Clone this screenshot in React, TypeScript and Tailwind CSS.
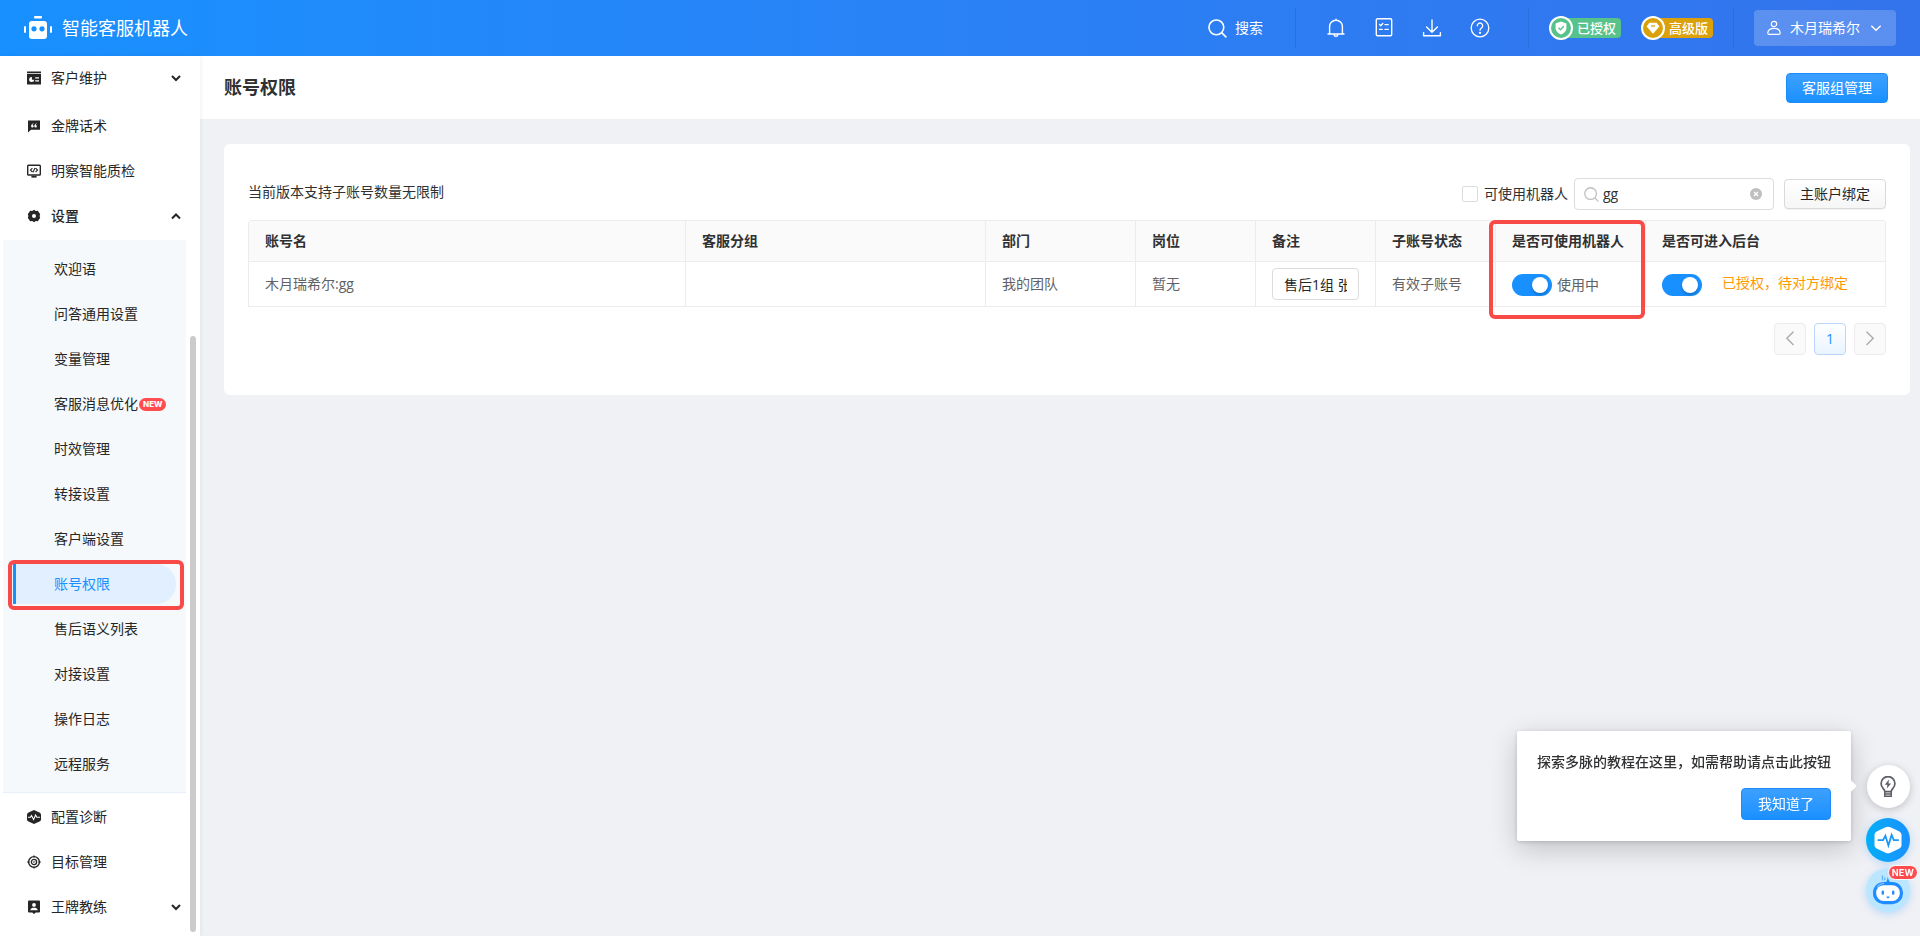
import React, { useState } from "react";

const line = {
  fill: "none",
  stroke: "currentColor",
  strokeLinecap: "round",
  strokeLinejoin: "round",
} as const;

function LogoIcon() {
  return (
    <svg width="28" height="24" viewBox="0 0 28 24" aria-hidden="true">
      <g fill="#fff">
        <rect x="10" y="0" width="8" height="2.6" rx="1" />
        <rect x="5" y="5" width="18" height="18" rx="3" />
        <rect x="0" y="10" width="2" height="7" rx="1" />
        <rect x="26" y="10" width="2" height="7" rx="1" />
      </g>
      <circle cx="10" cy="12.8" r="2.6" fill="#1890ff" />
      <circle cx="18" cy="12.8" r="2.6" fill="#1890ff" />
    </svg>
  );
}

function SearchIcon({ size }: { size: number }) {
  return (
    <svg width={size} height={size} viewBox="0 0 20 20" aria-hidden="true" {...line} strokeWidth="1.7">
      <circle cx="8.8" cy="8.8" r="7.8" />
      <path d="M14.6 14.6L18.8 18.8" />
    </svg>
  );
}

function BellIcon() {
  return (
    <svg width="20" height="20" viewBox="0 0 20 20" aria-hidden="true" {...line} strokeWidth="1.4">
      <path d="M3.6 15.8V8.6a6.4 6.4 0 0 1 12.800 0v7.200M2 16h16M8.2 16.6a1.800 1.800 0 0 0 3.600 0M10 2V1.200" />
    </svg>
  );
}

function TaskIcon() {
  return (
    <svg width="20" height="20" viewBox="0 0 20 20" aria-hidden="true" {...line} strokeWidth="1.4">
      <rect x="2.3" y=".8" width="15.4" height="17" rx="1.2" />
      <path d="M5.6 6.600l1.100 1.100L8.800 5.600M11 6.600h3.200M5.600 11.400h2.600M11 11.400h3.200" />
    </svg>
  );
}

function DownloadIcon() {
  return (
    <svg width="20" height="20" viewBox="0 0 20 20" aria-hidden="true" {...line} strokeWidth="1.4">
      <path d="M10 2v12M4.6 9L10 14.3 15.4 9M1.600 14.600v3.200h16.800v-3.200" />
    </svg>
  );
}

function HelpIcon() {
  return (
    <svg width="20" height="20" viewBox="0 0 20 20" aria-hidden="true" {...line} strokeWidth="1.3">
      <circle cx="10" cy="10" r="8.8" />
      <path d="M7.3 7.8a2.7 2.7 0 1 1 4.2 2.2c-1 .7-1.5 1.1-1.5 2.2" />
      <circle cx="10" cy="14.8" r=".5" fill="currentColor" />
    </svg>
  );
}

function UserIcon() {
  return (
    <svg width="14" height="16" viewBox="0 0 14 16" aria-hidden="true" {...line} strokeWidth="1.2">
      <circle cx="7" cy="4" r="2.7" />
      <path d="M.8 12.600C1.200 9.600 3.600 8.300 7 8.300s5.800 1.300 6.200 4.300q.1 1.800-1.400 1.800H2.200q-1.500 0-1.400-1.800z" />
    </svg>
  );
}

function Chevron({ dir, size, weight }: { dir: "up" | "down" | "left" | "right"; size: number; weight: number }) {
  const paths = {
    up: "M2 8.5L6 4.5 10 8.5",
    down: "M2 4L6 8 10 4",
    left: "M8.6 0.500L3.600 5.500 8.600 10.500",
    right: "M3.400 0.500L8.400 5.500 3.400 10.500",
  };
  return (
    <svg width={size} height={size} viewBox="0 0 12 12" aria-hidden="true" fill="none" stroke="currentColor" strokeWidth={weight}>
      <path d={paths[dir]} />
    </svg>
  );
}

const menuIcons: Record<string, React.ReactNode> = {
  customer: (
    <>
      <path fill="#262626" d="M0 .6h14v1.300H0zM0 2.800h14V13.600H0z" />
      <path fill="#fff" d="M4.900 5.900v2.800h2.400a2.600 2.600 0 1 1-2.400-2.800zM8.200 6.200H12v1.300H8.200zM8.200 9.200H12v1.300H8.200z" />
    </>
  ),
  script: (
    <>
      <path fill="#262626" d="M1 1.4h12v9.4H4L1 13.4z" />
      <path fill="#fff" d="M6.6 4.2C5 4.7 4.1 5.8 4.1 7.2a1.3 1.3 0 1 0 1.4-1.3c0-.5.4-1 1.1-1.2zM9.8 4.2C8.2 4.7 7.3 5.8 7.3 7.2a1.3 1.3 0 1 0 1.4-1.3c0-.5.4-1 1.1-1.2z" />
    </>
  ),
  inspect: (
    <g fill="none" stroke="#262626" strokeWidth="1.4">
      <rect x=".7" y="1.200" width="12.600" height="9.800" rx=".8" />
      <path d="M5.400 4.200L3.500 6.100 5.400 8M8.600 4.200l1.900 1.900-1.900 1.900M8 3.900L6 8.300" strokeWidth="1.100" />
      <path d="M4.400 12.700h5.200" strokeWidth="1.800" />
    </g>
  ),
  settings: (
    <>
      <path
        fill="#262626"
        d="M7 .8l1.800 1.100 2.200-.1.900 1.800 1.300 1.500L12.600 7l.6 1.900-1.300 1.500-.9 1.800-2.200-.1L7 13.200l-1.800-1.100-2.200.1-.9-1.800L.8 8.900 1.400 7 .8 5.100l1.300-1.500L3 1.800l2.200.1z"
      />
      <circle cx="7" cy="7" r="2" fill="#fff" />
    </>
  ),
  diagnose: (
    <>
      <path fill="#262626" d="M7 0l5.4 2.4Q14 3.2 14 4.6v4.8q0 1.4-1.6 2.2L7 14l-5.4-2.400Q0 10.800 0 9.400V4.600Q0 3.200 1.600 2.400z" />
      <path d="M1 7.200h2.500l1-1.600 2.100 4L8.600 5l1.200 2.200H13" fill="none" stroke="#fff" strokeWidth="1.100" />
    </>
  ),
  target: (
    <g fill="none" stroke="#262626">
      <circle cx="7" cy="7" r="5.400" strokeWidth="1.400" />
      <circle cx="7" cy="7" r="2.600" strokeWidth="1.300" />
      <circle cx="7" cy="7" r=".8" fill="#262626" stroke="none" />
      <path d="M7 .4v2M7 11.600v2M.4 7h2M11.600 7h2" strokeWidth="1.300" />
    </g>
  ),
  coach: (
    <>
      <path fill="#262626" d="M2 .6h10q1 0 1 1v10q0 1-1 1H8.800L7 14l-1.800-1.400H2q-1 0-1-1v-10q0-1 1-1z" />
      <circle cx="7" cy="4.900" r="1.900" fill="#fff" />
      <path fill="#fff" d="M3.200 10.200c.6-1.900 2-2.500 3.800-2.500s3.200.6 3.800 2.500z" />
    </>
  ),
};

function MenuItem({ icon, label, arrow, bold }: { icon: string; label: string; arrow?: "up" | "down"; bold?: boolean }) {
  return (
    <a href="#" className="flex h-[45px] shrink-0 items-center pr-2 pl-[27px]">
      <svg width="14" height="14" viewBox="0 0 14 14" aria-hidden="true">
        {menuIcons[icon]}
      </svg>
      <span className={bold ? "ml-[10px] flex-1 font-medium" : "ml-[10px] flex-1"}>{label}</span>
      {arrow && <Chevron dir={arrow} size={12} weight={2} />}
    </a>
  );
}

const settingsItems = [
  "欢迎语",
  "问答通用设置",
  "变量管理",
  "客服消息优化",
  "时效管理",
  "转接设置",
  "客户端设置",
  "账号权限",
  "售后语义列表",
  "对接设置",
  "操作日志",
  "远程服务",
];

function SubItem({ label }: { label: string }) {
  if (label === "账号权限") {
    return (
      <a href="#" aria-current="page" className="relative flex h-[45px] items-center pr-[10px] pl-[10px] text-[#1890ff]">
        <span className="flex h-10 flex-1 items-center rounded-r-full border-l-[3px] border-[#1890ff] bg-[#e1efff] pl-[38px]">
          {label}
        </span>
        <span className="pointer-events-none absolute -top-px right-[2px] -bottom-1 left-[5px] rounded-md border-4 border-[#f84b48]" />
      </a>
    );
  }
  return (
    <a href="#" className="flex h-[45px] items-center pl-[51px]">
      {label}
      {label === "客服消息优化" && (
        <span className="mt-[2px] ml-px rounded-full bg-[#ff4d4f] px-1 font-['Inter'] text-[8px] leading-[13px] font-extrabold text-white">
          NEW
        </span>
      )}
    </a>
  );
}

function Sidebar() {
  return (
    <aside className="relative z-10 flex w-[200px] shrink-0 bg-white shadow-[1px_0_4px_rgba(0,0,0,0.06)]">
      <nav className="flex flex-1 flex-col overflow-hidden text-[#262626]">
        <div className="-mt-px flex flex-col pb-[2px]">
          <MenuItem icon="customer" label="客户维护" arrow="down" />
          <div className="h-[3px]" />
          <MenuItem icon="script" label="金牌话术" />
          <MenuItem icon="inspect" label="明察智能质检" />
          <MenuItem icon="settings" label="设置" arrow="up" bold />
        </div>
        <div className="mr-[4px] ml-[3px] border-b border-[#e6effa] bg-[#f5f9fc] py-[6px]">
          {settingsItems.map((label) => (
            <SubItem key={label} label={label} />
          ))}
        </div>
        <div className="flex flex-col pt-px">
          <MenuItem icon="diagnose" label="配置诊断" />
          <MenuItem icon="target" label="目标管理" />
          <MenuItem icon="coach" label="王牌教练" arrow="down" />
        </div>
      </nav>
      <div className="flex w-[10px] flex-col justify-end pb-1">
        <div className="h-[68%] w-[6px] rounded-full bg-[#cbcbcb]" />
      </div>
    </aside>
  );
}

function Divider() {
  return <div className="h-10 w-px bg-[#2b6ee0]" />;
}

function Tag({ kind, label }: { kind: "auth" | "pro"; label: string }) {
  const auth = kind === "auth";
  return (
    <div className="flex items-center">
      <span
        className={
          auth
            ? "z-10 flex size-6 items-center justify-center rounded-full border-2 border-white bg-[#57c28a]"
            : "z-10 flex size-6 items-center justify-center rounded-full border-2 border-white bg-[#dba10b]"
        }
      >
        <svg width="14" height="14" viewBox="0 0 14 14" aria-hidden="true">
          {auth ? (
            <>
              <path fill="#fff" d="M7 .6l5.400 1.800v4.800c0 3-2.400 5-5.400 6.200-3-1.200-5.400-3.200-5.400-6.200V2.400z" />
              <path d="M4.600 6.800l1.900 1.900 3.200-3.400" fill="none" stroke="#57c28a" strokeWidth="1.400" />
            </>
          ) : (
            <>
              <path fill="#fff" d="M3.400 1.800h7.200l2.800 3.600L7 12.800.6 5.400z" />
              <path d="M5 5h4" stroke="#dba10b" strokeWidth="1.300" />
            </>
          )}
        </svg>
      </span>
      <span
        className={
          auth
            ? "-ml-3 flex h-5 w-[60px] items-center justify-end rounded bg-[#57c28a] pr-[5px] text-[13px] font-medium"
            : "-ml-3 flex h-5 w-[60px] items-center justify-end rounded bg-[#dba10b] pr-[5px] text-[13px] font-medium"
        }
      >
        {label}
      </span>
    </div>
  );
}

function TopBar() {
  return (
    <header className="flex h-14 shrink-0 items-center justify-between bg-linear-to-r from-[#1890ff] to-[#3373ec] pr-6 pl-6 text-white">
      <div className="flex items-center gap-[10px]">
        <LogoIcon />
        <span className="pb-px text-lg">智能客服机器人</span>
      </div>
      <div className="flex items-center">
        <button className="flex items-center gap-2">
          <SearchIcon size={19} />
          搜索
        </button>
        <div className="ml-8 flex">
          <Divider />
        </div>
        <div className="mr-[38px] ml-[30px] flex items-center gap-7">
          <button aria-label="通知"><BellIcon /></button>
          <button aria-label="任务"><TaskIcon /></button>
          <button aria-label="下载"><DownloadIcon /></button>
          <button aria-label="帮助"><HelpIcon /></button>
        </div>
        <Divider />
        <div className="mr-5 ml-5 flex gap-5">
          <Tag kind="auth" label="已授权" />
          <Tag kind="pro" label="高级版" />
        </div>
        <Divider />
        <button className="ml-5 flex h-9 w-[142px] items-center rounded bg-white/20 pl-[13px]">
          <UserIcon />
          <span className="mr-[9px] ml-[9px]">木月瑞希尔</span>
          <Chevron dir="down" size={14} weight={1.2} />
        </button>
      </div>
    </header>
  );
}

function PrimaryButton({ children, tall }: { children: React.ReactNode; tall?: boolean }) {
  return (
    <button
      className={
        tall
          ? "h-8 rounded border border-[#1c8cfa] bg-linear-to-b from-[#3ca0ff] to-[#1890ff] px-4 text-white"
          : "h-[30px] rounded border border-[#1c8cfa] bg-linear-to-b from-[#3ca0ff] to-[#1890ff] px-[15px] text-white"
      }
    >
      {children}
    </button>
  );
}

function Switch({ label }: { label: string }) {
  const [on, setOn] = useState(true);
  return (
    <input
      type="checkbox"
      role="switch"
      aria-label={label}
      checked={on}
      onChange={() => setOn(!on)}
      className="flex h-[22px] w-10 shrink-0 appearance-none items-center rounded-full bg-[#bfbfbf] px-1 before:size-4 before:rounded-full before:bg-white before:shadow-[0_2px_3px_rgba(0,35,80,0.3)] before:content-[''] checked:justify-end checked:bg-[#1890ff]"
    />
  );
}

const headCell = "relative h-[41px] border-r border-b border-[#ececec] bg-[#fafafa] px-4 text-left font-semibold text-[#303133]";
const bodyCell = "h-[45px] border-r border-b border-[#ececec] px-4 text-[#606266]";

function AccountTable() {
  const [remark, setRemark] = useState("售后1组 张");
  return (
    <table className="w-full table-fixed border-separate border-spacing-0 rounded-t border-t border-l border-[#ececec]">
      <colgroup>
        <col />
        <col className="w-[300px]" />
        <col className="w-[150px]" />
        <col className="w-[120px]" />
        <col className="w-[120px]" />
        <col className="w-[120px]" />
        <col className="w-[150px]" />
        <col className="w-[240px]" />
      </colgroup>
      <thead>
        <tr>
          <th className={headCell}>账号名</th>
          <th className={headCell}>客服分组</th>
          <th className={headCell}>部门</th>
          <th className={headCell}>岗位</th>
          <th className={headCell}>备注</th>
          <th className={headCell}>子账号状态</th>
          <th className={headCell}>
            是否可使用机器人
            <span className="pointer-events-none absolute -top-px right-0 -left-[7px] z-10 h-[99px] rounded-md border-4 border-[#f84b48]" />
          </th>
          <th className={headCell}>是否可进入后台</th>
        </tr>
      </thead>
      <tbody>
        <tr>
          <td className={bodyCell}>木月瑞希尔:gg</td>
          <td className={bodyCell} />
          <td className={bodyCell}>我的团队</td>
          <td className={bodyCell}>暂无</td>
          <td className={bodyCell}>
            <input
              type="text"
              aria-label="备注"
              value={remark}
              onChange={(e) => setRemark(e.target.value)}
              className="block h-8 w-full rounded border border-[#dcdcdc] bg-white px-[11px] text-[#262626]"
            />
          </td>
          <td className={bodyCell}>有效子账号</td>
          <td className={bodyCell}>
            <div className="flex items-center gap-[5px] pt-px">
              <Switch label="是否可使用机器人" />
              使用中
            </div>
          </td>
          <td className={bodyCell}>
            <div className="flex items-center gap-5 pt-px">
              <Switch label="是否可进入后台" />
              <span className="pb-[3px] text-[#ff9800]">已授权，待对方绑定</span>
            </div>
          </td>
        </tr>
      </tbody>
    </table>
  );
}

function Toolbar() {
  const [query, setQuery] = useState("gg");
  return (
    <div className="flex items-center justify-between">
      <p className="pb-1 text-[#303133]">当前版本支持子账号数量无限制</p>
      <div className="flex items-center text-[#303133]">
        <label className="flex items-center gap-[6px]">
          <input
            type="checkbox"
            className="size-4 appearance-none rounded-xs border border-[#dcdcdc] bg-white checked:bg-[#1890ff]"
          />
          可使用机器人
        </label>
        <div className="ml-[6px] flex h-8 w-[200px] items-center rounded border border-[#dcdcdc] pr-[11px] pl-[9px]">
          <span className="text-[#bfbfbf]">
            <SearchIcon size={15} />
          </span>
          <input
            type="text"
            aria-label="搜索账号"
            value={query}
            onChange={(e) => setQuery(e.target.value)}
            className="ml-1 min-w-0 flex-1 bg-transparent outline-none"
          />
          <button aria-label="清除" onClick={() => setQuery("")}>
            <svg width="12" height="12" viewBox="0 0 12 12" aria-hidden="true">
              <circle cx="6" cy="6" r="6" fill="#bfbfbf" />
              <path d="M4 4l4 4M8 4L4 8" stroke="#fff" strokeWidth="1.300" />
            </svg>
          </button>
        </div>
        <button className="ml-[10px] h-[30px] rounded border border-[#d9d9d9] bg-linear-to-b from-white to-[#f6f6f6] px-[15px] text-[#262626] shadow-[0_1px_1px_rgba(0,0,0,0.05)]">
          主账户绑定
        </button>
      </div>
    </div>
  );
}

function Pagination() {
  const side = "flex size-8 items-center justify-center rounded border border-[#ececec] bg-[#fafafa] text-[#a8a8a8]";
  return (
    <div className="mt-4 flex justify-end gap-2">
      <button aria-label="上一页" className={side}>
        <Chevron dir="left" size={16} weight={1} />
      </button>
      <button className="size-8 rounded border border-[#bcd6fb] bg-linear-to-b from-white to-[#e9f4ff] text-[#1890ff]">1</button>
      <button aria-label="下一页" className={side}>
        <Chevron dir="right" size={16} weight={1} />
      </button>
    </div>
  );
}

function GuideTip() {
  const [open, setOpen] = useState(true);
  if (!open) return null;
  return (
    <div className="fixed right-[69px] bottom-[95px] z-20 rounded-xs bg-white px-5 pt-5 pb-[21px] shadow-[0_8px_28px_rgba(0,0,0,0.2),0_1px_4px_rgba(0,0,0,0.16)]">
      <p className="leading-[22px] font-medium whitespace-nowrap text-[#303133]">探索多脉的教程在这里，如需帮助请点击此按钮</p>
      <div className="mt-[15px] flex justify-end" onClick={() => setOpen(false)}>
        <PrimaryButton tall>我知道了</PrimaryButton>
      </div>
      <span className="absolute top-[51px] -right-1 size-2 rotate-45 bg-white" />
    </div>
  );
}

function FloatingTools() {
  return (
    <div className="fixed right-[10px] bottom-6 z-20 flex flex-col items-center">
      <button
        aria-label="教程"
        className="flex size-[43px] items-center justify-center rounded-full bg-white text-[#5c5f66] shadow-[0_2px_8px_rgba(0,0,0,0.2)]"
      >
        <svg width="18" height="22" viewBox="0 0 18 22" aria-hidden="true" fill="none" stroke="currentColor" strokeWidth="1.700">
          <path d="M5.800 15.600c0-1.600-.7-2.300-1.700-3.300a6.900 6.900 0 1 1 9.800 0c-1 1-1.700 1.700-1.700 3.300z" />
          <path d="M5.800 15.600v4.600h6.400v-4.600M5.800 17.900h6.400" strokeWidth="1.500" />
          <path d="M10 3.600L5.800 8.700h2.600l-.6 3.900 4.300-5.200H9.500z" fill="currentColor" stroke="none" />
        </svg>
      </button>
      <button
        aria-label="诊断"
        className="mt-[10px] flex size-11 items-center justify-center rounded-full bg-linear-to-r from-[#04aef6] to-[#1a90ff] shadow-[0_2px_8px_rgba(24,144,255,0.25)]"
      >
        <svg width="28" height="28" viewBox="0 0 28 28" aria-hidden="true">
          <path
            fill="#fff"
            d="M11.600 1.200q2.400-1 4.800 0l9 4.200q2.100 1.100 2.100 3.400v10.400q0 2.300-2.100 3.400l-9 4.200q-2.400 1-4.800 0l-9-4.200Q.5 21.500.5 19.200V8.800Q.5 6.500 2.600 5.400z"
          />
          <path d="M3.600 14.200H9l2.400-4.400 3 9.600 3.200-10.400 2.200 5.200h5" fill="none" stroke="#1a96fb" strokeWidth="1.800" />
        </svg>
      </button>
      <button
        aria-label="智能助手"
        className="relative mt-[6px] flex size-11 items-center justify-center rounded-full bg-[#bae6ff] shadow-[0_2px_8px_rgba(24,144,255,0.25)]"
      >
        <svg width="32" height="32" viewBox="0 0 32 32" aria-hidden="true">
          <path d="M10.500 1.500v5M12.800 3.500v3" stroke="#5cb4ff" strokeWidth="1.200" />
          <path d="M12.500 9.500c2.500-1.500 3-4 3.300-7 .3 3 1.500 5.500 4 7z" fill="#1890ff" />
          <rect x="2.600" y="9.600" width="26.800" height="19" rx="9" fill="#fff" stroke="#1f8cff" strokeWidth="3.200" />
          <path d="M5 13.500Q7.500 9.500 12 9.300" fill="none" stroke="#7cc4ff" strokeWidth="1.300" />
          <rect x="9.600" y="16.500" width="2.400" height="4.200" rx="1.200" fill="#1f8cff" />
          <rect x="20" y="16.500" width="2.400" height="4.200" rx="1.200" fill="#1f8cff" />
          <path d="M14.300 22.600h3.400q-.3 1.800-1.700 1.800t-1.700-1.800z" fill="#1f8cff" />
        </svg>
        <span className="absolute -top-[3px] -right-2 rounded-full border border-white bg-[#ff4d4f] px-[3px] font-['Inter'] text-[9px] leading-[13px] font-bold tracking-wide text-white">
          NEW
        </span>
      </button>
    </div>
  );
}

export default function App() {
  return (
    <div className="flex min-h-screen flex-col bg-[#f0f1f5] font-['Open_Sans','Noto_Sans_CJK_SC',sans-serif] text-sm text-[#262626]">
      <TopBar />
      <div className="flex flex-1">
        <Sidebar />
        <main className="min-w-0 flex-1 bg-[#f0f1f5]">
          <div className="flex h-[63px] items-center justify-between bg-white pr-8 pl-6">
            <h1 className="pb-[2px] text-lg font-semibold text-[#303133]">账号权限</h1>
            <PrimaryButton>客服组管理</PrimaryButton>
          </div>
          <section className="mt-[25px] mr-[10px] ml-6 rounded-md bg-white px-6 pt-[34px] pb-10">
            <Toolbar />
            <div className="mt-[10px]">
              <AccountTable />
            </div>
            <Pagination />
          </section>
        </main>
      </div>
      <GuideTip />
      <FloatingTools />
    </div>
  );
}
